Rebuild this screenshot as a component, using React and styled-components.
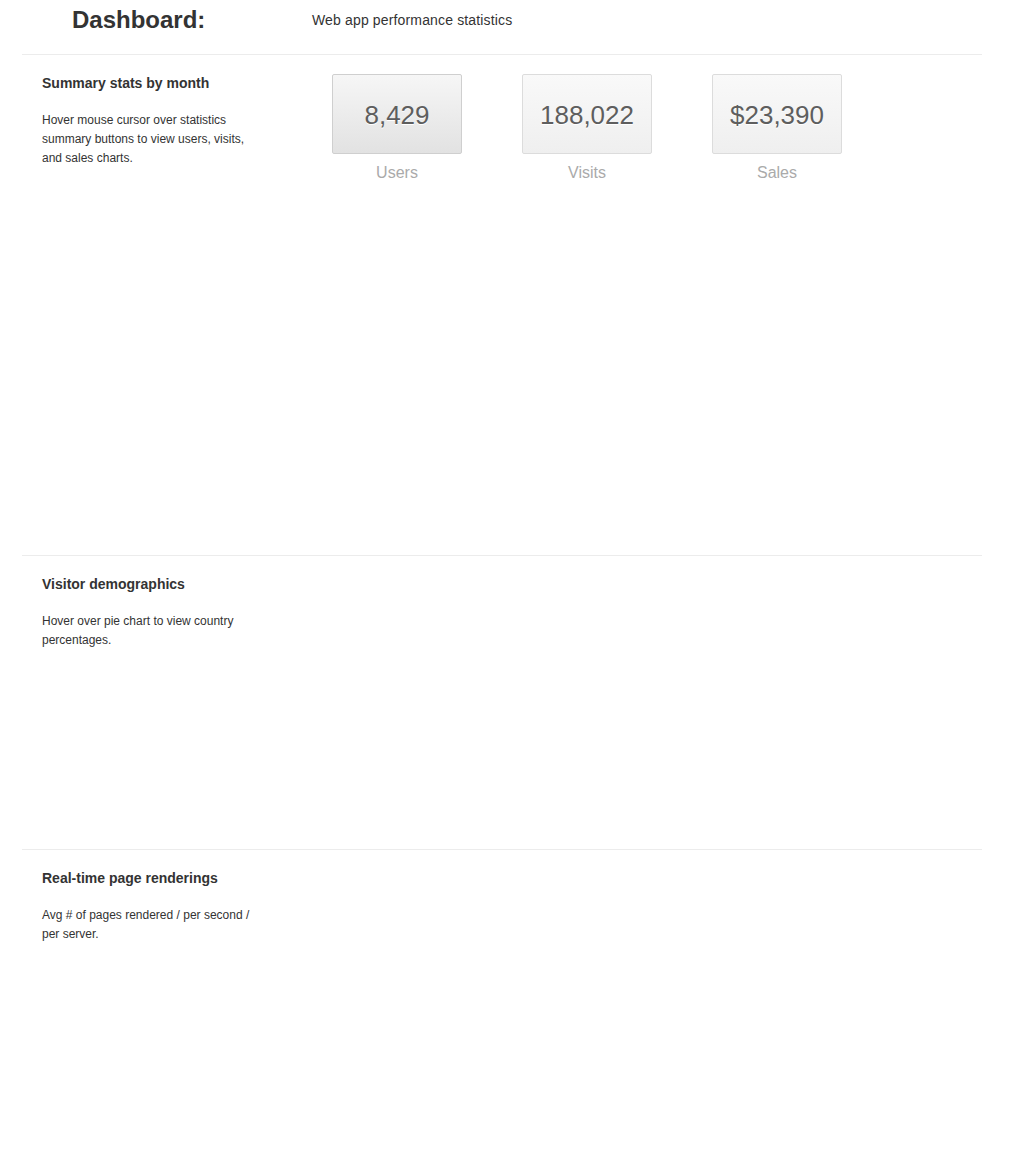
import React from "react";
import styled, { createGlobalStyle } from "styled-components";

const GlobalStyle = createGlobalStyle`
  body {
    margin: 0;
    background: #fff;
    font-family: "Liberation Sans", Arial, sans-serif;
    color: #333;
  }
`;

const stats = [
  { value: "8,429", label: "Users", active: true },
  { value: "188,022", label: "Visits" },
  { value: "$23,390", label: "Sales" },
];

const sections = [
  {
    title: "Summary stats by month",
    text: "Hover mouse cursor over statistics summary buttons to view users, visits, and sales charts.",
    height: 501,
    stats: true,
  },
  {
    title: "Visitor demographics",
    text: "Hover over pie chart to view country percentages.",
    height: 294,
  },
  {
    title: "Real-time page renderings",
    text: "Avg # of pages rendered / per second / per server.",
    height: 320,
  },
];

const App = () => (
  <>
    <GlobalStyle />
    <Page>
      <Header>
        <Title>Dashboard:</Title>
        <Subtitle>Web app performance statistics</Subtitle>
      </Header>
      {sections.map((s) => (
        <Section key={s.title} $height={s.height}>
          <Info>
            <Heading>{s.title}</Heading>
            <Description>{s.text}</Description>
          </Info>
          <Content>
            {s.stats && (
              <StatRow>
                {stats.map((st) => (
                  <Stat key={st.label}>
                    <StatBox $active={st.active}>{st.value}</StatBox>
                    <StatLabel>{st.label}</StatLabel>
                  </Stat>
                ))}
              </StatRow>
            )}
          </Content>
        </Section>
      ))}
    </Page>
  </>
);

export default App;

const Page = styled.div`
  width: 960px;
  margin-left: 22px;
`;

const Header = styled.header`
  height: 54px;
  box-sizing: border-box;
  padding: 1px 0 0 50px;
  display: flex;
  align-items: center;
`;

const Title = styled.h1`
  margin: 0 0 16px;
  width: 240px;
  font-size: 24px;
  line-height: 28px;
  font-weight: bold;
  color: #333;
`;

const Subtitle = styled.p`
  margin: 0 0 16px;
  font-size: 14px;
  line-height: 20px;
  letter-spacing: 0.15px;
  color: #333;
`;

const Section = styled.section`
  height: ${(p) => p.$height}px;
  box-sizing: border-box;
  border-top: 1px solid #ececec;
  padding: 19px 20px 0;
  display: flex;
`;

const Info = styled.div`
  width: 290px;
  flex-shrink: 0;
`;

const Heading = styled.h2`
  margin: 0 0 18px;
  font-size: 14px;
  line-height: 19px;
  font-weight: bold;
  color: #333;
`;

const Description = styled.p`
  margin: 0;
  width: 220px;
  font-size: 12px;
  line-height: 19px;
  color: #333;
`;

const Content = styled.div`
  flex: 1;
`;

const StatRow = styled.div`
  display: flex;
  gap: 60px;
`;

const Stat = styled.div`
  width: 130px;
  display: flex;
  flex-direction: column;
  align-items: center;
`;

const StatBox = styled.div`
  width: 130px;
  height: 80px;
  box-sizing: border-box;
  border: 1px solid ${(p) => (p.$active ? "#cfcfcf" : "#dcdcdc")};
  border-radius: 2px;
  background: ${(p) =>
    p.$active
      ? "linear-gradient(to bottom, #f6f6f6, #e2e2e2)"
      : "linear-gradient(to bottom, #f9f9f9, #efefef)"};
  display: flex;
  align-items: center;
  justify-content: center;
  font-size: 26px;
  color: #5e5e5e;
  text-shadow: 0 1px 0 #fff;
  padding-top: 2px;
`;

const StatLabel = styled.div`
  margin-top: 9px;
  font-size: 16px;
  line-height: 20px;
  color: #aaa;
`;
